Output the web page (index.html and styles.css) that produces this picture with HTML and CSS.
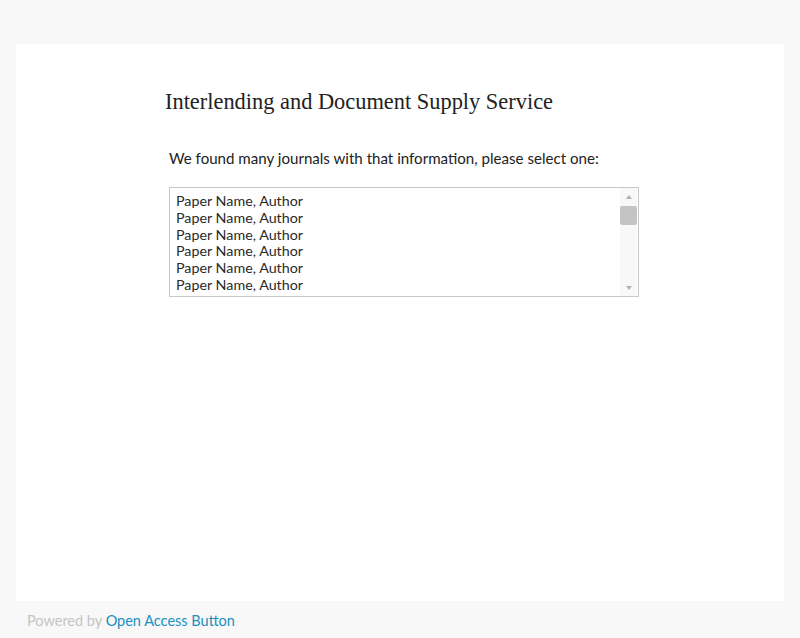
FILE: index.html
```html
<!DOCTYPE html>
<html>
<head>
<meta charset="utf-8">
<link rel="stylesheet" href="styles.css">
</head>
<body>
<div class="page">
  <main class="card">
    <div class="content">
      <h1 class="title">Interlending and Document Supply Service</h1>
      <p class="intro">We found many journals with that information, please select one:</p>
      <div class="listbox" role="listbox">
        <ul class="options">
          <li class="option">Paper Name, Author</li>
          <li class="option">Paper Name, Author</li>
          <li class="option">Paper Name, Author</li>
          <li class="option">Paper Name, Author</li>
          <li class="option">Paper Name, Author</li>
          <li class="option">Paper Name, Author</li>
        </ul>
        <div class="scrollbar">
          <div class="sb-button"><span class="arrow-up"></span></div>
          <div class="sb-track"><div class="sb-thumb"></div></div>
          <div class="sb-button"><span class="arrow-down"></span></div>
        </div>
      </div>
    </div>
  </main>
  <footer class="footer">Powered by <a class="brand" href="#">Open Access Button</a></footer>
</div>
</body>
</html>
```
FILE: styles.css
```css
html, body {
  margin: 0;
  padding: 0;
  background: #f8f8f8;
}
.page {
  width: 800px;
  height: 638px;
  padding: 44px 16px 0;
  box-sizing: border-box;
  font-family: "Lato", "Open Sans", sans-serif;
}
.card {
  background: #fff;
  height: 557px;
}
.content {
  padding: 45px 0 0 149px;
}
.title {
  margin: 0;
  font-family: "Liberation Serif", serif;
  font-weight: normal;
  font-size: 22.4px;
  color: #222;
}
.intro {
  margin: 34px 0 0 4px;
  font-size: 15.1px;
  color: #222;
  font-weight: 400;
}
.listbox {
  display: flex;
  margin: 20px 0 0 4px;
  width: 470px;
  height: 110px;
  box-sizing: border-box;
  border: 1px solid #c8c8c8;
  background: #fff;
}
.options {
  flex: 1;
  margin: 0;
  padding: 5px 0 0 6px;
  list-style: none;
  overflow: hidden;
  font-size: 14.3px;
  line-height: 16.8px;
  color: #2a2a2a;
}
.option {
  white-space: nowrap;
}
.scrollbar {
  width: 17px;
  margin-right: 1px;
  display: flex;
  flex-direction: column;
  background: #f8f8f8;
}
.sb-button {
  height: 17px;
  display: flex;
  align-items: center;
  justify-content: center;
}
.arrow-up, .arrow-down {
  width: 0;
  height: 0;
  border-left: 3.5px solid transparent;
  border-right: 3.5px solid transparent;
}
.arrow-up {
  border-bottom: 4px solid #b0b0b0;
  margin-top: 1px;
}
.arrow-down {
  border-top: 4px solid #b0b0b0;
  margin-top: 1px;
}
.sb-track {
  flex: 1;
  padding-top: 1px;
}
.sb-thumb {
  height: 19px;
  background: #c4c4c4;
  border-radius: 2px;
}
.footer {
  padding: 11px 11px 0;
  font-size: 14.5px;
  color: #c4c4c4;
  font-weight: 400;
}
.brand {
  color: #1a8fbf;
  text-decoration: none;
}
```
